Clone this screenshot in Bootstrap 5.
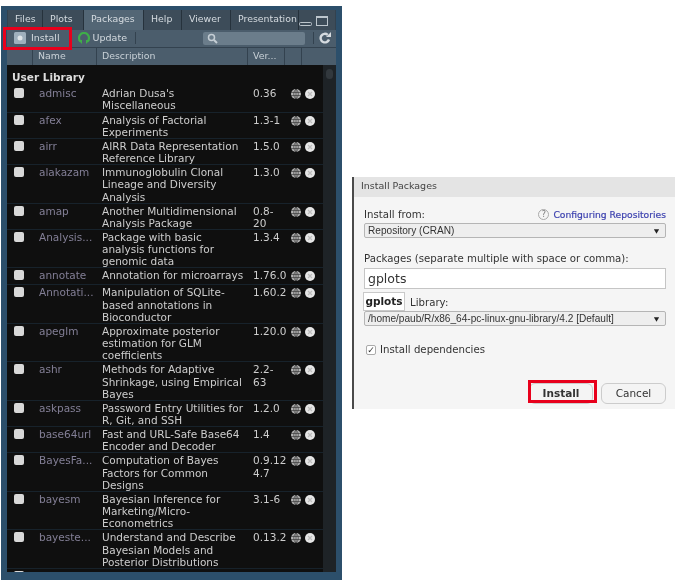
<!DOCTYPE html>
<html lang="en">

<head>
    <meta charset="UTF-8">
    <title>Install Packages</title>
    <link href="https://cdn.jsdelivr.net/npm/bootstrap@5.3.0/dist/css/bootstrap.min.css" rel="stylesheet">
    <style>
        body {
            background: #fff;
            margin: 0;
            width: 678px;
            height: 581px;
            overflow: hidden;
            font-family: "DejaVu Sans", sans-serif;
            font-size: 10.5px;
            line-height: 12.15px;
        }

        .pane-outer {
            width: 341px;
            height: 574px;
            margin: 6px 0 0 1px;
            background: #2c4f6b;
            padding: 4px 6px 8px 6px;
            flex: none;
            filter: blur(.4px);
        }

        .pane-inner {
            height: 100%;
            background: #0f0f0f;
            overflow: hidden;
        }

        .tab-bar {
            height: 20px;
            background: #33424f;
            color: #d5dbe0;
            padding-left: 1px;
            font-size: 9.4px;
        }

        .rs-tab {
            height: 20px;
            line-height: 17px;
            background: #3d4c59;
            border-right: 1px solid #26323c;
            padding-left: 7px;
            white-space: nowrap;
            overflow: hidden;
        }

        .rs-tab.active-tab {
            background: #536675;
        }

        .win-btns {
            width: 36px;
            background: #3d4c59;
            padding-top: 2px;
        }

        .tool-bar {
            height: 18px;
            background: #4b5d6c;
            color: #d5dbe0;
            border-bottom: 1px solid #33424f;
            font-size: 9.5px;
        }

        .tool-sep {
            width: 1px;
            height: 12px;
            background: #33424f;
        }

        .search-box {
            width: 102px;
            height: 13px;
            background: #6b7d8b;
            border-radius: 2px;
        }

        .head-row {
            height: 17px;
            line-height: 16px;
            background: #4b5d6c;
            color: #c9d1d7;
            font-size: 9.4px;
        }

        .head-cell {
            height: 17px;
            border-right: 1px solid #33424f;
            padding-left: 5px;
        }

        .list-area {
            height: 511px;
            overflow: hidden;
        }

        .rows-col {
            width: 316px;
        }

        .rs-scroll {
            width: 13px;
            background: #1e2327;
            flex: none;
            padding: 4px 3px 0;
        }

        .rs-thumb {
            width: 7px;
            height: 10px;
            border-radius: 4px;
            background: #32383d;
        }

        .lib-title {
            height: 21.4px;
            padding: 6px 0 0 5px;
            font-weight: 700;
            color: #dcdcdc;
        }

        .pkg-row {
            min-height: 17px;
            padding: 1px 0 0;
            border-bottom: 1px solid #17222b;
            color: #cdcdcd;
        }

        .pkg-check {
            width: 10px;
            height: 10px;
            background: #d8d8d8;
            border-radius: 2px;
            margin: 1px 15px 0 7px;
            flex: none;
        }

        .pkg-name {
            width: 63px;
            color: #837f96;
            flex: none;
            white-space: nowrap;
        }

        .pkg-desc {
            width: 151px;
            padding-right: 7px;
            flex: none;
        }

        .pkg-ver {
            width: 38px;
            flex: none;
            word-break: break-all;
        }

        .pkg-x {
            width: 10px;
            height: 10px;
            margin: 2px 0 0 4px;
            flex: none;
        }

        .pkg-globe {
            width: 10px;
            height: 10px;
            margin-top: 2px;
            flex: none;
        }

        .dlg {
            position: relative;
            width: 323px;
            height: 232px;
            margin: 177px 0 0 10px;
            background: #f5f5f5;
            border-left: 2px solid #4a4a4a;
            flex: none;
            font-size: 10.2px;
            color: #333;
            filter: blur(.4px);
        }

        .dlg-title {
            height: 20px;
            line-height: 18px;
            background: #e4e4e4;
            padding-left: 7px;
            font-size: 9.5px;
            color: #444;
        }

        .dlg-body {
            padding: 11px 9px 0 10px;
        }

        .dlg-label {
            line-height: 13px;
        }

        .help-link {
            font-size: 9.2px;
            color: #3f44b0;
            -webkit-text-stroke: .2px #3f44b0;
        }

        .help-mark {
            width: 11px;
            height: 11px;
            border: 1px solid #aaa;
            border-radius: 50%;
            font-size: 8px;
            line-height: 9px;
            text-align: center;
            color: #777;
        }

        .dlg-select.form-select {
            height: 15px;
            padding: 0 0 0 3px;
            font-family: "Liberation Sans", sans-serif;
            font-size: 10.1px;
            line-height: 12px;
            color: #333;
            background-color: #eee;
            background-image: url("data:image/svg+xml,%3Csvg xmlns='http://www.w3.org/2000/svg' viewBox='0 0 8 6'%3E%3Cpath d='M1 1h6L4 6z' fill='%23222'/%3E%3C/svg%3E");
            background-size: 7px 6px;
            background-position: right 5px center;
            border: 1px solid #b5b5b5;
            border-radius: 2px;
        }

        .dlg-input.form-control {
            height: 21px;
            padding: 0 3px;
            font-size: 12.5px;
            color: #333;
            background: #fff;
            border: 1px solid #c5c5c5;
            border-radius: 0;
        }

        .auto-pop {
            position: absolute;
            left: 9px;
            top: 115px;
            width: 42px;
            height: 19px;
            background: #fff;
            border: 1px solid #c9c9c9;
            font-weight: 700;
            font-size: 10.5px;
            line-height: 16px;
            text-align: center;
            color: #222;
        }

        .dep-box {
            width: 10px;
            height: 10px;
            border: 1px solid #aaa;
            border-radius: 2px;
            background: #fff;
            font-size: 9px;
            line-height: 9px;
            text-align: center;
            color: #333;
        }

        .dlg-btn {
            height: 21px;
            border-radius: 6px;
            border: 1px solid #ccc;
            background: #f4f4f4;
            font-size: 10.5px;
            line-height: 19px;
            text-align: center;
            color: #333;
        }

        .red-box {
            position: absolute;
            border: 3px solid #e8001c;
        }

        .red-tools {
            left: 3px;
            top: 27px;
            width: 69px;
            height: 23px;
        }

        .red-ok {
            left: 528px;
            top: 380px;
            width: 69px;
            height: 23px;
        }
    </style>
</head>

<body>
    <div class="d-flex align-items-start position-relative">
        <div class="pane-outer">
            <div class="pane-inner d-flex flex-column">
                <div class="tab-bar d-flex flex-none">
                    <div class="rs-tab" style="width:35px">Files</div>
                    <div class="rs-tab" style="width:41px">Plots</div>
                    <div class="rs-tab active-tab" style="width:60px">Packages</div>
                    <div class="rs-tab" style="width:38px">Help</div>
                    <div class="rs-tab" style="width:49px">Viewer</div>
                    <div class="rs-tab" style="width:68px">Presentation</div>
                    <div class="win-btns d-flex align-items-center gap-1">
                        <svg width="13" height="12" viewBox="0 0 13 12">
                            <rect x="0.5" y="7.5" width="12" height="3" rx="1" fill="none" stroke="#bcc5cc" />
                        </svg>
                        <svg width="12" height="12" viewBox="0 0 12 12">
                            <rect x="0.5" y="1.5" width="11" height="9" fill="none" stroke="#bcc5cc" />
                            <path d="M0 2h12" stroke="#bcc5cc" stroke-width="2" />
                        </svg>
                    </div>
                </div>

                <div class="tool-bar d-flex align-items-center flex-none">
                    <svg style="margin-left:7px" width="12" height="12" viewBox="0 0 12 12">
                        <rect width="12" height="12" rx="1.5" fill="#9fb0bd" />
                        <circle cx="6" cy="6" r="2.5" fill="#dfe5e9" />
                    </svg>
                    <span style="margin:0 9px 0 5px">Install</span>
                    <div class="tool-sep" style="margin-right:8px"></div>
                    <svg width="12" height="12" viewBox="0 0 12 12">
                        <path d="M2.5 9.5a5 5 0 1 1 7 0" fill="none" stroke="#3fae49" stroke-width="2.2" />
                        <path d="M0 8h4v4zM12 8H8v4z" fill="#3fae49" />
                    </svg>
                    <span style="margin-left:3px">Update</span>
                    <div class="tool-sep ms-2"></div>
                    <div class="search-box ms-auto d-flex align-items-center ps-1">
                        <svg width="11" height="11" viewBox="0 0 11 11">
                            <circle cx="4.5" cy="4.5" r="3" fill="none" stroke="#c5ced5" stroke-width="1.5" />
                            <path d="M7 7l3 3" stroke="#c5ced5" stroke-width="2" />
                        </svg>
                    </div>
                    <div class="tool-sep" style="margin:0 5px 0 8px"></div>
                    <svg style="margin-right:5px" width="12" height="12" viewBox="0 0 12 12">
                        <path d="M10 7.5A4.3 4.3 0 1 1 8.7 2.8" fill="none" stroke="#d5dbe0" stroke-width="2.4" />
                        <path d="M7 5h5V0z" fill="#d5dbe0" />
                    </svg>
                </div>

                <div class="head-row d-flex flex-none">
                    <div class="head-cell" style="width:26px"></div>
                    <div class="head-cell" style="width:64px">Name</div>
                    <div class="head-cell" style="width:151px">Description</div>
                    <div class="head-cell" style="width:37px">Ver...</div>
                    <div class="head-cell" style="width:17px"></div>
                    <div class="head-cell flex-fill border-0"></div>
                </div>

                <div class="list-area d-flex">
                    <div class="rows-col">
                        <div class="lib-title">User Library</div>
                        <div id="pkgRows"></div>
                    </div>
                    <div class="rs-scroll">
                        <div class="rs-thumb"></div>
                    </div>
                </div>
            </div>
        </div>

        <div class="dlg">
            <div class="dlg-title">Install Packages</div>
            <div class="dlg-body">
                <div class="d-flex justify-content-between align-items-end dlg-label">
                    <span>Install from:</span>
                    <span class="d-flex align-items-center gap-1">
                        <span class="help-mark">?</span>
                        <span class="help-link">Configuring Repositories</span>
                    </span>
                </div>
                <select class="form-select dlg-select" style="margin-top:2px">
                    <option>Repository (CRAN)</option>
                </select>
                <div class="dlg-label" style="margin-top:14px">Packages (separate multiple with space or comma):</div>
                <input class="form-control dlg-input" style="margin-top:3px" type="text" value="gplots">
                <div class="dlg-label" style="margin:7px 0 0 46px">Library:</div>
                <select class="form-select dlg-select" style="margin-top:2px">
                    <option>/home/paub/R/x86_64-pc-linux-gnu-library/4.2 [Default]</option>
                </select>
                <div class="d-flex align-items-center gap-1" style="margin:18px 0 0 2px">
                    <span class="dep-box">✓</span>
                    <span>Install dependencies</span>
                </div>
                <div class="d-flex justify-content-end gap-2" style="margin-top:27px">
                    <div class="dlg-btn fw-bold" style="width:64px">Install</div>
                    <div class="dlg-btn" style="width:65px">Cancel</div>
                </div>
            </div>
            <div class="auto-pop">gplots</div>
        </div>

        <div class="red-box red-tools"></div>
        <div class="red-box red-ok"></div>
    </div>

    <script>
        const paquetes = [
            ['admisc', "Adrian Dusa's Miscellaneous", '0.36'],
            ['afex', 'Analysis of Factorial Experiments', '1.3-1'],
            ['airr', 'AIRR Data Representation Reference Library', '1.5.0'],
            ['alakazam', 'Immunoglobulin Clonal Lineage and Diversity Analysis', '1.3.0'],
            ['amap', 'Another Multidimensional Analysis Package', '0.8-<br>20'],
            ['Analysis...', 'Package with basic analysis functions for genomic data', '1.3.4'],
            ['annotate', 'Annotation for microarrays', '1.76.0'],
            ['Annotati...', 'Manipulation of SQLite-based annotations in Bioconductor', '1.60.2'],
            ['apeglm', 'Approximate posterior estimation for GLM coefficients', '1.20.0'],
            ['ashr', 'Methods for Adaptive Shrinkage, using Empirical Bayes', '2.2-<br>63'],
            ['askpass', 'Password Entry Utilities for R, Git, and SSH', '1.2.0'],
            ['base64url', 'Fast and URL-Safe Base64 Encoder and Decoder', '1.4'],
            ['BayesFa...', 'Computation of Bayes Factors for Common Designs', '0.9.12<br>4.7'],
            ['bayesm', 'Bayesian Inference for Marketing/Micro-Econometrics', '3.1-6'],
            ['bayeste...', 'Understand and Describe Bayesian Models and Posterior Distributions', '0.13.2'],
            ['BBmisc', 'Miscellaneous Helper Functions for B. Bischl', '1.13'],
        ];

        const contenedor = document.getElementById('pkgRows');
        paquetes.forEach(p => {
            const fila = document.createElement('div');
            fila.className = 'pkg-row d-flex';
            fila.innerHTML = `
                <div class="pkg-check"></div>
                <div class="pkg-name">${p[0]}</div>
                <div class="pkg-desc">${p[1]}</div>
                <div class="pkg-ver">${p[2]}</div>
                <svg class="pkg-globe" viewBox="0 0 10 10">
                    <circle cx="5" cy="5" r="5" fill="#b5b5b5"/>
                    <path d="M0 3.4h10M0 6.6h10M5 0v10M5 0C2 3 2 7 5 10M5 0c3 3 3 7 0 10" fill="none" stroke="#222" stroke-width=".6"/>
                </svg>
                <svg class="pkg-x" viewBox="0 0 10 10">
                    <circle cx="5" cy="5" r="5" fill="#e6e6e6"/>
                    <path d="M3 3l4 4M7 3l-4 4" stroke="#bdbdbd" stroke-width="1.2"/>
                </svg>`;
            contenedor.appendChild(fila);
        });
    </script>

    <script src="https://cdn.jsdelivr.net/npm/bootstrap@5.3.0/dist/js/bootstrap.bundle.min.js"></script>
</body>

</html>
